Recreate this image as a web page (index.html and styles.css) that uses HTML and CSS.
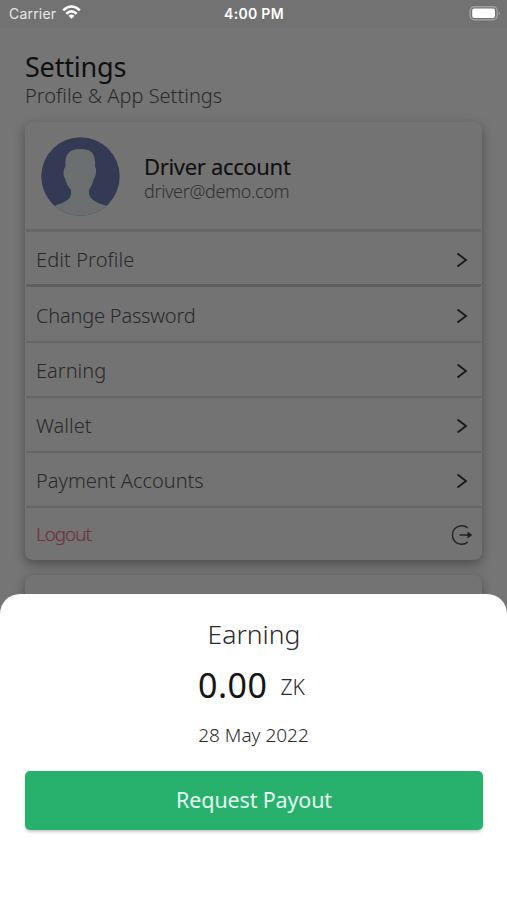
FILE: index.html
```html
<!DOCTYPE html>
<html lang="en">
<head>
<meta charset="utf-8">
<title>Settings</title>
<link rel="stylesheet" href="styles.css">
</head>
<body>
<header class="status">
  <div class="carrier"><span>Carrier</span>
    <svg width="19" height="15" viewBox="0 0 19 15" fill="none" stroke="#fff" stroke-width="2.5"><path d="M1.2 5.3Q9.5-2.3 17.8 5.3M4.3 8.7Q9.5 4 14.7 8.7"/><path d="M6.6 10.8Q9.5 8.4 12.4 10.8L9.5 13.9Z" fill="#fff" stroke="none"/></svg>
  </div>
  <div class="clock"><span>4:00 PM</span></div>
  <svg class="battery" width="32" height="15" viewBox="0 0 32 15"><rect x="1.200" y=".8" width="27" height="13" rx="4" fill="none" stroke="#a0a0a0" stroke-width="1.4"/><rect x="3.200" y="2.500" width="22.800" height="9.600" rx="2" fill="#fff"/><path d="M29.800 5.200q2 2.100 0 4.200z" fill="#a6a6a6"/></svg>
</header>
<main class="page">
  <h1><span>Settings</span></h1>
  <p class="subtitle"><span>Profile &amp; App Settings</span></p>
  <section class="card">
    <div class="profile">
      <svg class="avatar" width="80" height="80" viewBox="0 0 80 80"><defs><clipPath id="round"><circle cx="39.500" cy="39.500" r="39.200"/></clipPath></defs><g clip-path="url(#round)"><path fill="#343954" d="M0 0h80v80H0z"/><path fill="#6b6f70" d="M24.500 30C23.500 17 28 12 39.500 12S55 17 54 30c2 1 1 10-1 11-1 5-3 9-5 12-1 9 5 12 18 16v14H13V69c13-4 18-7 17-16-3-3-5-7-6-12-2-1-2-10 .5-11z"/></g></svg>
      <div class="identity"><div class="name"><span>Driver account</span></div><div class="email"><span>driver@demo.com</span></div></div>
    </div>
    <div class="row first"><span class="edit">Edit Profile</span><svg class="chevron" viewBox="0 0 12 16"><path d="M1.500 1.500 10 8l-8.500 6.500"/></svg></div>
    <div class="row second"><span class="password">Change Password</span><svg class="chevron" viewBox="0 0 12 16"><path d="M1.500 1.500 10 8l-8.500 6.500"/></svg></div>
    <div class="row"><span class="earn">Earning</span><svg class="chevron" viewBox="0 0 12 16"><path d="M1.500 1.500 10 8l-8.500 6.500"/></svg></div>
    <div class="row"><span class="wallet">Wallet</span><svg class="chevron" viewBox="0 0 12 16"><path d="M1.500 1.500 10 8l-8.500 6.500"/></svg></div>
    <div class="row"><span class="accounts">Payment Accounts</span><svg class="chevron" viewBox="0 0 12 16"><path d="M1.500 1.500 10 8l-8.500 6.500"/></svg></div>
    <div class="row logout"><span class="out">Logout</span><svg width="22" height="22" viewBox="0 0 22 22" fill="none" stroke="#252525" stroke-width="1.500"><path d="M16.700 3.900A9.300 9.300 0 1 0 16.700 18.100M8.500 11H17"/><path d="m16.500 7.500 4.800 3.500-4.800 3.500z" fill="#202020" stroke="none"/></svg></div>
  </section>
  <section class="card next"></section>
</main>
<section class="sheet">
  <h2><span>Earning</span></h2>
  <div class="amount"><span class="value">0.00</span><span class="currency">ZK</span></div>
  <div class="date"><span>28 May 2022</span></div>
  <button><span>Request Payout</span></button>
</section>
</body>
</html>
```
FILE: styles.css
```css
* { box-sizing: border-box; }
body { margin: 0; width: 507px; height: 900px; overflow: hidden; display: flex; flex-direction: column; background: #757575; color: #292929; font-family: "Noto Sans", sans-serif; font-weight: 300; }
h1, h2, p { margin: 0; font-weight: 300; }
span { white-space: nowrap; }
.status { height: 28px; display: grid; grid-template-columns: 1fr auto 1fr; align-items: center; padding: 0 6px 1px 9px; background: #727272; color: #fff; font-family: Inter, sans-serif; font-size: 14px; font-weight: 400; }
.carrier { display: flex; align-items: center; gap: 6px; letter-spacing: .2px; color: #e8e8e8; }
.carrier svg { margin-top: -2px; }
.battery { margin-top: -1px; }
.clock { font-weight: 600; letter-spacing: .3px; margin-right: 2px; }
.battery { justify-self: end; }
.page { height: 566px; padding: 21px 25px 0; overflow: hidden; }
h1 { height: 35px; line-height: 35px; font-size: 27px; font-weight: 400; letter-spacing: -.2px; color: #101010; }
.subtitle { height: 38px; line-height: 23px; font-size: 20px; }
.card { width: 457px; height: 438px; padding: 0 1px; background: #737373; border-radius: 8px; box-shadow: 0 4px 11px rgba(0,0,0,.35); }
.next { height: 60px; margin-top: 15px; }
.profile { height: 110px; padding: 15px; display: flex; gap: 23px; border-bottom: 3px solid #666; }
.identity { padding-top: 15px; }
.name { height: 28px; line-height: 28px; font-size: 22px; font-weight: 400; letter-spacing: -.33px; color: #101010; -webkit-text-stroke: .1px #101010; }
.email { height: 23px; line-height: 23px; font-size: 18px; letter-spacing: -.36px; color: #303030; }
.row { height: 55px; padding: 2px 13px 0 10px; display: flex; align-items: center; justify-content: space-between; border-bottom: 2px solid #666; font-size: 20px; }
.first { border-bottom: 3px solid #606060; }
.second { height: 56px; }
.password { letter-spacing: -.2px; }
.edit { letter-spacing: .1px; }
.chevron { width: 12px; height: 16px; margin-top: 1px; fill: none; stroke: #191919; stroke-width: 1.8; }
.logout { height: 52px; padding-top: 0; border: 0; padding-right: 8px; color: #70333b; font-size: 18px; font-weight: 400; letter-spacing: -.75px; }
.out { font-weight: 300; font-size: 19px; letter-spacing: -1.1px; -webkit-text-stroke: .2px #70333b; }
.logout svg { margin-top: 1px; }
.sheet { height: 306px; padding: 22px 25px 0; background: #fff; border-radius: 20px 20px 0 0; text-align: center; display: flex; flex-direction: column; align-items: stretch; }
h2 { height: 37px; line-height: 37px; font-size: 26.500px; padding-left: 1px; }
.amount { height: 65px; display: flex; justify-content: center; align-items: baseline; gap: 13px; padding-right: 4px; line-height: 65px; }
.value { font-family: "Noto Sans", sans-serif; font-size: 34px; font-weight: 400; letter-spacing: .5px; color: #151515; }
.currency { position: relative; top: -3px; font-size: 21px; }
.date { height: 34px; line-height: 34px; font-size: 19px; }
button { width: 458px; height: 59px; margin-top: 19px; padding: 0 0 3px; border: 0; border-radius: 5px; background: #27b16c; box-shadow: 0 2px 3px #0003; color: #e5fff2; font: 400 21.500px "Noto Sans", sans-serif; letter-spacing: -.15px; }
```
